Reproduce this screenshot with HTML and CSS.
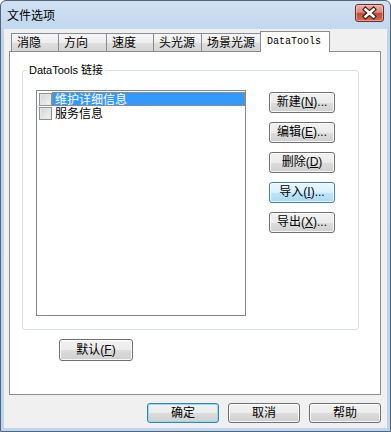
FILE: index.html
```html
<!DOCTYPE html>
<html lang="zh-CN">
<head>
    <meta charset="UTF-8">
    <title>文件选项</title>
    <link rel="stylesheet" href="styles.css">
</head>
<body>
    <div class="window">
        <!-- Title bar -->
        <div class="titlebar">
            <span class="title">文件选项</span>
            <span class="close">
                <svg width="27" height="16" viewBox="0 0 27 16">
                    <path d="M9.5 4.5 L17.5 11.5 M17.5 4.5 L9.5 11.5" stroke="#3b1a15" stroke-width="4.8" stroke-linecap="square"/>
                    <path d="M9.5 4.5 L17.5 11.5 M17.5 4.5 L9.5 11.5" stroke="#fff" stroke-width="2.6" stroke-linecap="square"/>
                </svg>
            </span>
        </div>

        <div class="client">
            <!-- Tabs -->
            <div class="tabs">
                <div class="tab t1">消隐</div>
                <div class="tab t2">方向</div>
                <div class="tab t3">速度</div>
                <div class="tab t4">头光源</div>
                <div class="tab t5">场景光源</div>
                <div class="tab active">DataTools</div>
            </div>

            <!-- Tab page -->
            <div class="panel">
                <fieldset class="group">
                    <legend>DataTools 链接</legend>
                    <div class="group-body">
                        <div class="listbox">
                            <div class="row selected">
                                <span class="check"></span>
                                <span class="item-text">维护详细信息</span>
                            </div>
                            <div class="row">
                                <span class="check"></span>
                                <span class="item-text">服务信息</span>
                            </div>
                        </div>
                        <div class="side-buttons">
                            <button class="btn side">新建(<u>N</u>)...</button>
                            <button class="btn side">编辑(<u>E</u>)...</button>
                            <button class="btn side">删除(<u>D</u>)</button>
                            <button class="btn side hover">导入(<u>I</u>)...</button>
                            <button class="btn side">导出(<u>X</u>)...</button>
                        </div>
                    </div>
                </fieldset>
                <button class="btn reset">默认(<u>F</u>)</button>
            </div>

            <!-- Dialog buttons -->
            <div class="footer">
                <button class="btn dialog default">确定</button>
                <button class="btn dialog">取消</button>
                <button class="btn dialog">帮助</button>
            </div>
        </div>
    </div>
</body>
</html>
```

FILE: styles.css
```css
/* Reset */
* {
    margin: 0;
    padding: 0;
    box-sizing: border-box;
}
body {
    font-family: "Liberation Sans", "Noto Sans CJK SC", sans-serif;
    font-size: 12px;
    color: #000;
    background: #fff;
}

/* Window frame */
.window {
    width: 391px;
    height: 432px;
    border: 1px solid #52667c;
    border-radius: 6px 6px 0 0;
    background: linear-gradient(#d0e1f3, #bdd3eb 40px, #bed4ec);
    display: flex;
    flex-direction: column;
}
.titlebar {
    height: 28px;
    display: flex;
    align-items: center;
    justify-content: space-between;
    padding: 0 6px;
}
.title {
    font-family: "Noto Sans CJK SC", sans-serif;
    font-size: 12px;
    line-height: 14px;
}
.close {
    width: 29px;
    height: 18px;
    margin-top: -5px;
    border: 1px solid #6e2b24;
    border-radius: 3px;
    background: linear-gradient(#eab0a3, #d98a7a 45%, #c24b37 52%, #cf6a52);
    box-shadow: inset 0 0 0 1px rgba(255, 220, 210, 0.5);
    display: flex;
}

/* Client area */
.client {
    flex: 1;
    margin: 0 3px 3px;
    background: #f0f0f0;
    padding: 2px 0 5px;
    display: flex;
    flex-direction: column;
}

/* Tabs */
.tabs {
    display: flex;
    align-items: flex-end;
    height: 20px;
    padding-left: 7px;
}
.tab {
    height: 18px;
    margin-right: -1px;
    border: 1px solid #898c95;
    border-bottom: none;
    background: linear-gradient(#f6f6f6, #ededed 50%, #dedede 51%, #d4d4d4);
    padding-left: 5px;
    font-family: "Noto Sans CJK SC", sans-serif;
    line-height: 16px;
    white-space: nowrap;
}
.t1 { width: 48px; }
.t2 { width: 49px; }
.t3 { width: 48px; }
.t4 { width: 49px; }
.t5 { width: 60px; }
.tab.active {
    width: 70px;
    height: 21px;
    margin-bottom: -1px;
    padding-top: 2px;
    padding-left: 6px;
    background: #fff;
    position: relative;
    z-index: 1;
    font-family: "Liberation Mono", monospace;
    font-size: 10px;
}

/* Tab page */
.panel {
    height: 344px;
    margin: 0 6px 0 5px;
    border: 1px solid #898c95;
    background: #fff;
    padding: 11px 0 0 12px;
}
.group {
    width: 337px;
    height: 267px;
    border: 1px solid #d5dfe5;
    border-radius: 3px;
    padding: 0;
}
.group legend {
    margin-left: 4px;
    padding: 0 2px;
    font-size: 11px;
    line-height: 14px;
}
.group-body {
    display: flex;
    padding: 13px 0 0 13px;
}

/* List box */
.listbox {
    width: 210px;
    height: 226px;
    border: 1px solid #828790;
    background: #fff;
    padding: 1px 0 0 2px;
}
.row {
    display: flex;
    align-items: center;
    height: 14px;
}
.check {
    width: 13px;
    height: 13px;
    border: 1px solid #8e8f8f;
    background: linear-gradient(135deg, #d0d3d7, #f4f4f4);
    box-shadow: inset 0 0 0 1px #e8e8e8;
}
.item-text {
    flex: 1;
    height: 14px;
    padding-left: 3px;
    font-family: "Noto Sans CJK SC", sans-serif;
    font-size: 12px;
    line-height: 14px;
}
.row.selected .item-text {
    background: #3399ff;
    color: #fff;
    outline: 1px dotted #e07b1f;
    outline-offset: -1px;
}

/* Buttons */
.btn {
    display: block;
    border: 1px solid #707070;
    border-radius: 3px;
    background: linear-gradient(#f2f2f2, #ebebeb 50%, #dddddd 51%, #cfcfcf);
    box-shadow: inset 0 0 0 1px rgba(255, 255, 255, 0.8);
    font-family: "Liberation Sans", "Noto Sans CJK SC", sans-serif;
    font-size: 12px;
    color: #000;
    text-align: center;
    white-space: nowrap;
}
.btn u {
    text-underline-offset: 1px;
}
.btn.hover {
    border-color: #3c7fb1;
    background: linear-gradient(#eaf6fd, #d9f0fc 50%, #bee6fd 51%, #a7d9f5);
}
.btn.default {
    border-color: #3c7fb1;
    box-shadow: inset 0 0 0 1px #8fdcf7;
}
.side-buttons {
    display: flex;
    flex-direction: column;
    gap: 9px;
    margin: 2px 0 0 23px;
}
.btn.side {
    width: 66px;
    height: 21px;
    line-height: 19px;
}
.btn.reset {
    width: 74px;
    height: 22px;
    line-height: 20px;
    margin: 9px 0 0 37px;
}
.footer {
    display: flex;
    justify-content: flex-end;
    gap: 9px;
    margin-top: 8px;
    padding-right: 6px;
}
.btn.dialog {
    width: 72px;
    height: 20px;
    line-height: 18px;
}
```
